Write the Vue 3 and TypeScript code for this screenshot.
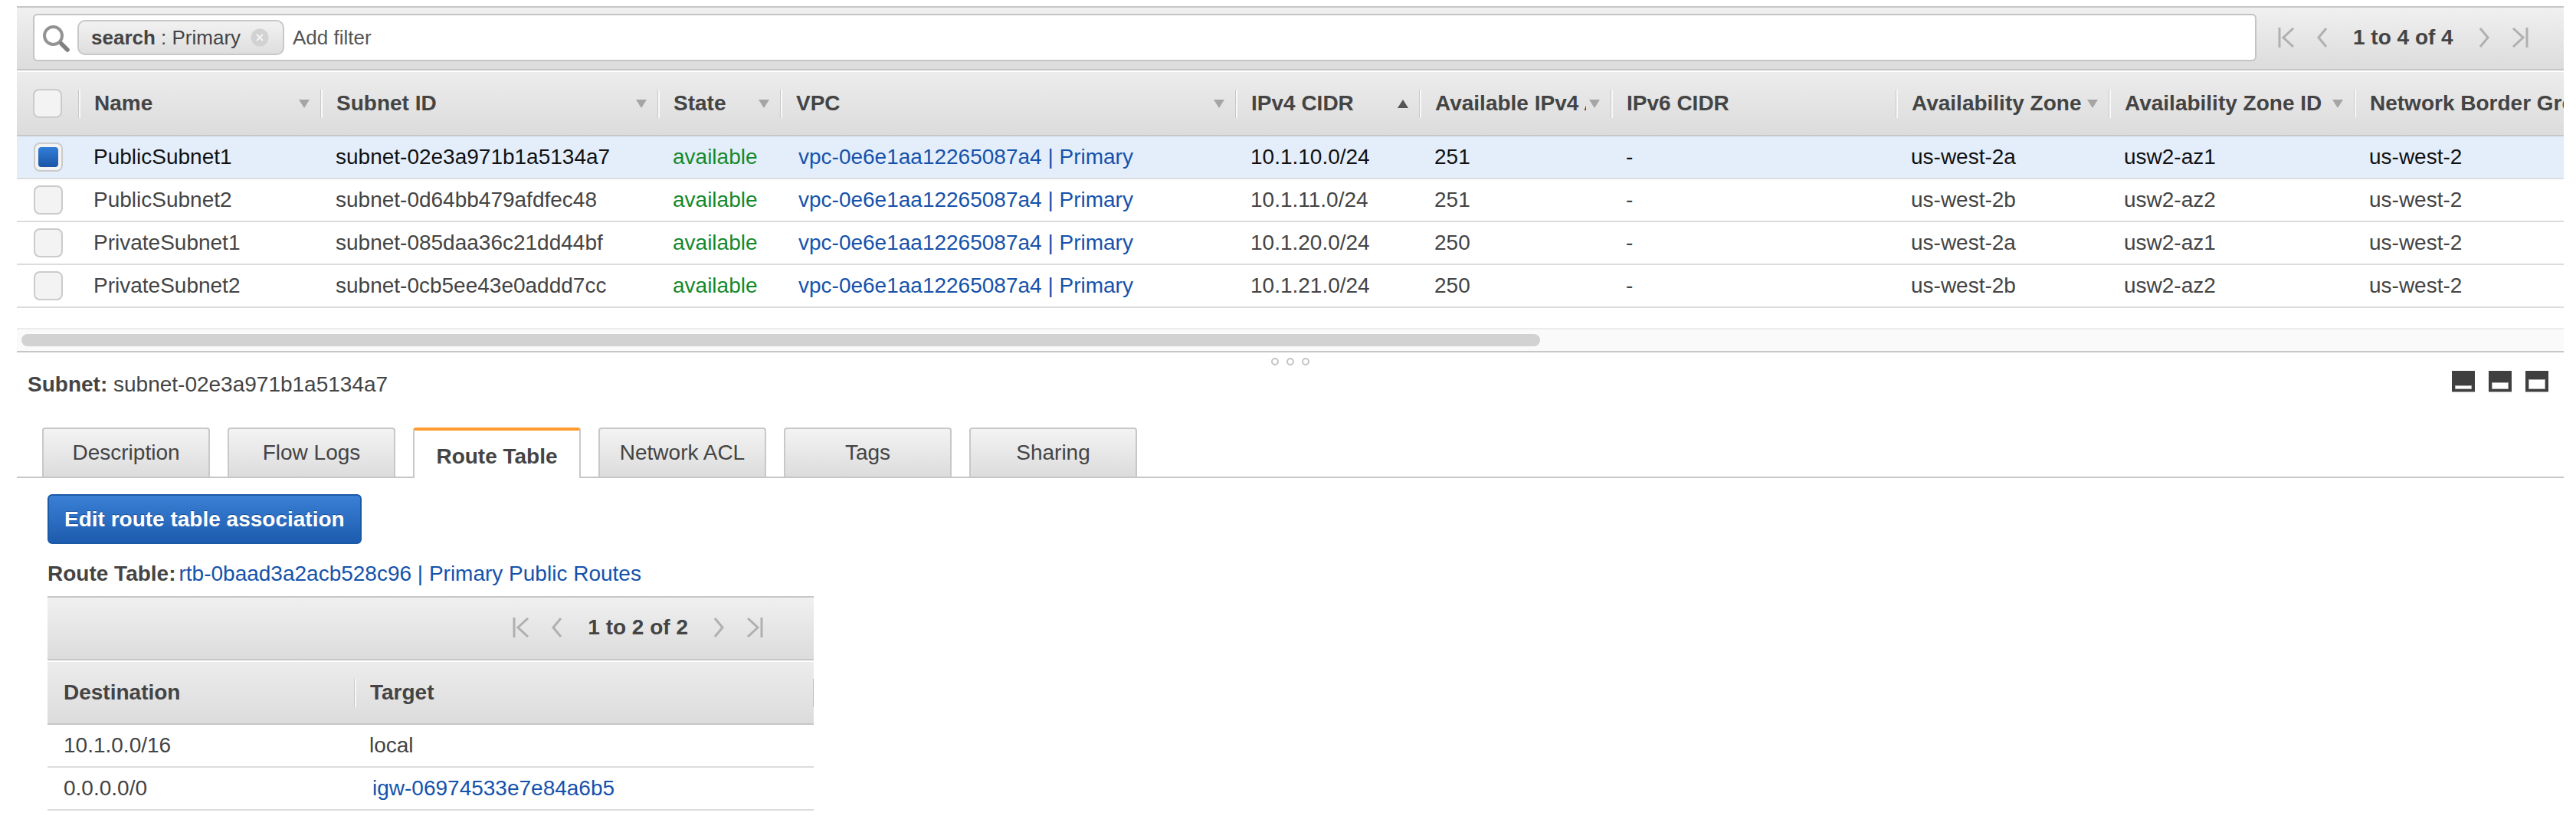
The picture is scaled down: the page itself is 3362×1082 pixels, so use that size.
<script setup lang="ts">
interface Column {
  label: string
  sort?: 'up' | 'down'
}

interface SubnetRow {
  name: string
  id: string
  cidr: string
  free: string
  zone: string
  zoneId: string
  selected?: boolean
}

const columns: Column[] = [
  { label: 'Name', sort: 'down' },
  { label: 'Subnet ID', sort: 'down' },
  { label: 'State', sort: 'down' },
  { label: 'VPC', sort: 'down' },
  { label: 'IPv4 CIDR', sort: 'up' },
  { label: 'Available IPv4 Addresses', sort: 'down' },
  { label: 'IPv6 CIDR' },
  { label: 'Availability Zone', sort: 'down' },
  { label: 'Availability Zone ID', sort: 'down' },
  { label: 'Network Border Group' },
]

const rows: SubnetRow[] = [
  { name: 'PublicSubnet1', id: 'subnet-02e3a971b1a5134a7', cidr: '10.1.10.0/24', free: '251', zone: 'us-west-2a', zoneId: 'usw2-az1', selected: true },
  { name: 'PublicSubnet2', id: 'subnet-0d64bb479afdfec48', cidr: '10.1.11.0/24', free: '251', zone: 'us-west-2b', zoneId: 'usw2-az2' },
  { name: 'PrivateSubnet1', id: 'subnet-085daa36c21dd44bf', cidr: '10.1.20.0/24', free: '250', zone: 'us-west-2a', zoneId: 'usw2-az1' },
  { name: 'PrivateSubnet2', id: 'subnet-0cb5ee43e0addd7cc', cidr: '10.1.21.0/24', free: '250', zone: 'us-west-2b', zoneId: 'usw2-az2' },
]

const tabs = ['Description', 'Flow Logs', 'Route Table', 'Network ACL', 'Tags', 'Sharing']
const activeTab = 'Route Table'
const layoutBars = [5, 9, 13]
</script>

<template>
  <div class="page">
    <div class="toolbar">
      <div class="filter">
        <svg class="search-icon" viewBox="0 0 36 36">
          <circle cx="14.5" cy="13.5" r="11.5" fill="#fff" stroke="#939393" stroke-width="4" />
          <path d="M25 24L33 32" stroke="#808080" stroke-width="5.5" stroke-linecap="round" />
        </svg>
        <div class="token">
          <span><b>search</b> : Primary</span>
          <svg class="token-x" viewBox="0 0 24 24">
            <circle cx="12" cy="12" r="11.5" fill="#d2d2d2" />
            <path d="M8 8L16 16M16 8L8 16" stroke="#f4f4f4" stroke-width="2" />
          </svg>
        </div>
        <span class="add-filter">Add filter</span>
      </div>
      <div class="pager">
        <svg class="pg-end" viewBox="0 0 22 26"><path d="M2 0V26M20 1L7 13L20 25" /></svg>
        <svg class="pg-step" viewBox="0 0 15 26"><path d="M13 1L3 13L13 25" /></svg>
        <span class="pg-text">1 to 4 of 4</span>
        <svg class="pg-step" viewBox="0 0 15 26"><path d="M2 1L12 13L2 25" /></svg>
        <svg class="pg-end" viewBox="0 0 22 26"><path d="M20 0V26M2 1L15 13L2 25" /></svg>
      </div>
    </div>

    <div class="subnets">
      <div class="subnet-grid head">
        <div class="check-cell"><span class="check"></span></div>
        <div v-for="col in columns" :key="col.label" class="th">
          <div class="th-inner">
            <span class="th-label">{{ col.label }}</span>
            <span v-if="col.sort" class="caret" :class="col.sort"></span>
          </div>
        </div>
      </div>
      <div v-for="row in rows" :key="row.id" class="subnet-grid row" :class="{ selected: row.selected }">
        <div class="check-cell body-check">
          <span class="check"><i v-if="row.selected"></i></span>
        </div>
        <div class="td">{{ row.name }}</div>
        <div class="td">{{ row.id }}</div>
        <div class="td state">available</div>
        <div class="td link vpc">vpc-0e6e1aa12265087a4 | Primary</div>
        <div class="td">{{ row.cidr }}</div>
        <div class="td">{{ row.free }}</div>
        <div class="td">-</div>
        <div class="td">{{ row.zone }}</div>
        <div class="td">{{ row.zoneId }}</div>
        <div class="td">us-west-2</div>
      </div>
    </div>

    <div class="scrollbar"><div class="thumb"></div></div>
    <div class="handle"><span></span><span></span><span></span></div>

    <div class="detail-head">
      <div class="detail-title"><b>Subnet:</b> subnet-02e3a971b1a5134a7</div>
      <div class="layout-icons">
        <span v-for="bar in layoutBars" :key="bar" class="layout-icon">
          <i :style="{ height: bar + 'px' }"></i>
        </span>
      </div>
    </div>

    <div class="tabs">
      <div v-for="tab in tabs" :key="tab" class="tab" :class="{ active: tab === activeTab }">{{ tab }}</div>
    </div>

    <div class="panel">
      <button class="primary">Edit route table association</button>
      <div class="route-title"><b>Route Table:</b><span class="link">rtb-0baad3a2acb528c96 | Primary Public Routes</span></div>

      <div class="routes">
        <div class="toolbar routes-bar">
          <div class="pager">
            <svg class="pg-end" viewBox="0 0 22 26"><path d="M2 0V26M20 1L7 13L20 25" /></svg>
            <svg class="pg-step" viewBox="0 0 15 26"><path d="M13 1L3 13L13 25" /></svg>
            <span class="pg-text">1 to 2 of 2</span>
            <svg class="pg-step" viewBox="0 0 15 26"><path d="M2 1L12 13L2 25" /></svg>
            <svg class="pg-end" viewBox="0 0 22 26"><path d="M20 0V26M2 1L15 13L2 25" /></svg>
          </div>
        </div>
        <div class="route-grid route-head">
          <div class="route-th">Destination</div>
          <div class="route-th target"><div class="th-inner">Target</div></div>
        </div>
        <div class="route-grid route-row">
          <div class="route-td">10.1.0.0/16</div>
          <div class="route-td target-td">local</div>
        </div>
        <div class="route-grid route-row">
          <div class="route-td">0.0.0.0/0</div>
          <div class="route-td target-td link igw">igw-06974533e7e84a6b5</div>
        </div>
      </div>
    </div>
  </div>
</template>

<style>
html,
body {
  margin: 0;
  background: #fff;
}
</style>

<style scoped>
.page {
  box-sizing: border-box;
  width: 3362px;
  height: 1082px;
  padding: 8px 16px 0 22px;
  overflow: hidden;
  font-family: "Liberation Sans", Arial, sans-serif;
  font-size: 28px;
  color: #444;
}

.toolbar {
  box-sizing: border-box;
  display: flex;
  height: 84px;
  padding: 8px 0 0 21px;
  border-top: 2px solid #c6c6c6;
  border-bottom: 2px solid #c6c6c6;
  background: linear-gradient(#f0f0f0, #dcdcdc);
}

.filter {
  box-sizing: border-box;
  display: flex;
  align-items: center;
  width: 2902px;
  height: 62px;
  padding-left: 10px;
  border: 2px solid #c4c4c4;
  border-radius: 6px;
  background: #fff;
}

.search-icon {
  width: 36px;
  height: 36px;
  flex-shrink: 0;
  margin-top: 4px;
}

.token {
  box-sizing: border-box;
  display: flex;
  align-items: center;
  justify-content: space-between;
  width: 270px;
  height: 46px;
  margin-left: 10px;
  padding: 0 18px 0 16px;
  border: 2px solid #c8c8c8;
  border-radius: 10px;
  background: linear-gradient(#f2f2f2, #dedede);
  font-size: 26px;
}

.token-x {
  width: 24px;
  height: 24px;
}

.add-filter {
  margin-left: 11px;
  font-size: 26px;
  color: #555;
}

.pager {
  display: flex;
  align-items: center;
  gap: 28px;
  height: 62px;
  margin-left: 28px;
}

.pg-end,
.pg-step {
  height: 26px;
  fill: none;
  stroke: #b0b0b0;
  stroke-width: 3;
}

.pg-end {
  width: 22px;
}

.pg-step {
  width: 15px;
}

.pg-text {
  margin: 0 5px;
  font-weight: 700;
  color: #444;
  white-space: nowrap;
}

.subnets {
  margin-top: 2px;
  overflow: hidden;
}

.subnet-grid {
  display: grid;
  grid-template-columns: 80px 316px 440px 160px 594px 240px 250px 372px 278px 320px 300px;
}

.head {
  box-sizing: border-box;
  height: 84px;
  border-bottom: 2px solid #c6c6c6;
  background: linear-gradient(#ececec, #dcdcdc);
}

.check-cell {
  display: flex;
  align-items: center;
  padding-left: 21px;
}

.body-check {
  padding-left: 22px;
}

.check {
  box-sizing: border-box;
  display: flex;
  align-items: center;
  justify-content: center;
  width: 38px;
  height: 38px;
  border: 2px solid #cbcbcb;
  border-radius: 8px;
  background: #f3f3f3;
}

.check i {
  width: 26px;
  height: 26px;
  border-radius: 4px;
  background: linear-gradient(#327ed8, #1a55a8);
}

.th {
  display: flex;
  align-items: center;
  min-width: 0;
}

.th-inner {
  box-sizing: border-box;
  display: flex;
  align-items: center;
  width: 100%;
  height: 37px;
  padding: 0 14px 0 20px;
  border-left: 1px solid #c8c8c8;
  box-shadow: inset 2px 0 0 #f8f8f8;
  font-weight: 700;
  color: #444;
}

.th-label {
  flex: 1;
  min-width: 0;
  overflow: hidden;
  white-space: nowrap;
}

.caret {
  flex-shrink: 0;
  width: 0;
  height: 0;
  margin-left: 4px;
  border-left: 7px solid transparent;
  border-right: 7px solid transparent;
}

.caret.down {
  border-top: 11px solid #a5a5a5;
}

.caret.up {
  border-bottom: 11px solid #555;
}

.row {
  box-sizing: border-box;
  height: 56px;
  border-bottom: 2px solid #dcdcdc;
  background: #fff;
}

.row.selected {
  background: #e4eefb;
  color: #111;
}

.td {
  display: flex;
  align-items: center;
  padding-left: 20px;
  white-space: nowrap;
  overflow: hidden;
}

.td.state {
  color: #14892c;
}

.td.vpc {
  padding-left: 24px;
}

.link {
  color: #1552ab;
}

.scrollbar {
  box-sizing: border-box;
  height: 32px;
  margin-top: 26px;
  padding: 6px 0 0 6px;
  border-top: 2px solid #ececec;
  border-bottom: 2px solid #c6c6c6;
  background: #fafafa;
}

.thumb {
  width: 1982px;
  height: 16px;
  border-radius: 8px;
  background: #d2d2d2;
}

.handle {
  display: flex;
  align-items: center;
  justify-content: center;
  gap: 10px;
  height: 16px;
  margin-top: 0;
  padding-top: 4px;
}

.handle span {
  box-sizing: border-box;
  width: 10px;
  height: 10px;
  border: 2px solid #c4c4c4;
  border-radius: 50%;
}

.detail-head {
  display: flex;
  align-items: center;
  justify-content: space-between;
  height: 28px;
  margin-top: 4px;
  padding: 0 20px 0 14px;
}

.detail-title {
  padding-top: 8px;
  white-space: nowrap;
}

.layout-icons {
  display: flex;
  gap: 18px;
}

.layout-icon {
  box-sizing: border-box;
  display: flex;
  align-items: flex-end;
  justify-content: center;
  width: 30px;
  height: 28px;
  padding-bottom: 3px;
  border-bottom: 1px solid #aaa;
  background: #3f3f3f;
}

.layout-icon i {
  width: 22px;
  background: #fff;
  box-shadow: inset 0 0 0 1px #b5b5b5;
}

.tabs {
  display: flex;
  gap: 23px;
  height: 64px;
  margin-top: 46px;
  padding-left: 33px;
  border-bottom: 2px solid #c6c6c6;
}

.tab {
  box-sizing: border-box;
  display: flex;
  align-items: center;
  justify-content: center;
  width: 219px;
  height: 64px;
  border: 2px solid #c8c8c8;
  border-bottom: 0;
  border-radius: 4px 4px 0 0;
  background: linear-gradient(#f3f3f3, #dcdcdc);
}

.tab.active {
  height: 66px;
  padding-top: 6px;
  border-top: 4px solid #ff9a2e;
  background: #fff;
  font-weight: 700;
}

.panel {
  padding-left: 40px;
}

.primary {
  display: block;
  box-sizing: border-box;
  height: 65px;
  margin-top: 21px;
  padding: 0 20px;
  border: 2px solid #1b5aa6;
  border-radius: 6px;
  background: linear-gradient(#3a80d6, #1d5cae);
  font: 700 28px "Liberation Sans", Arial, sans-serif;
  color: #fff;
  text-shadow: 0 -1px 0 #1a4f96;
}

.route-title {
  display: flex;
  align-items: center;
  gap: 4px;
  height: 32px;
  margin-top: 23px;
}

.routes {
  width: 1000px;
  margin-top: 13px;
}

.routes-bar {
  justify-content: flex-end;
  padding: 8px 66px 0 0;
}

.route-grid {
  display: grid;
  grid-template-columns: 400px 600px;
}

.route-head {
  box-sizing: border-box;
  height: 82px;
  margin-top: 2px;
  border-bottom: 2px solid #c6c6c6;
  background: linear-gradient(#ececec, #dcdcdc);
}

.route-th {
  display: flex;
  align-items: center;
  padding-left: 21px;
  font-weight: 700;
}

.route-th.target {
  padding-left: 0;
}

.route-th.target .th-inner {
  border-right: 1px solid #bbb;
}

.route-row {
  box-sizing: border-box;
  height: 56px;
  border-bottom: 2px solid #dcdcdc;
}

.route-td {
  display: flex;
  align-items: center;
  padding-left: 21px;
}

.target-td {
  padding-left: 20px;
}

.igw {
  padding-left: 24px;
}
</style>
